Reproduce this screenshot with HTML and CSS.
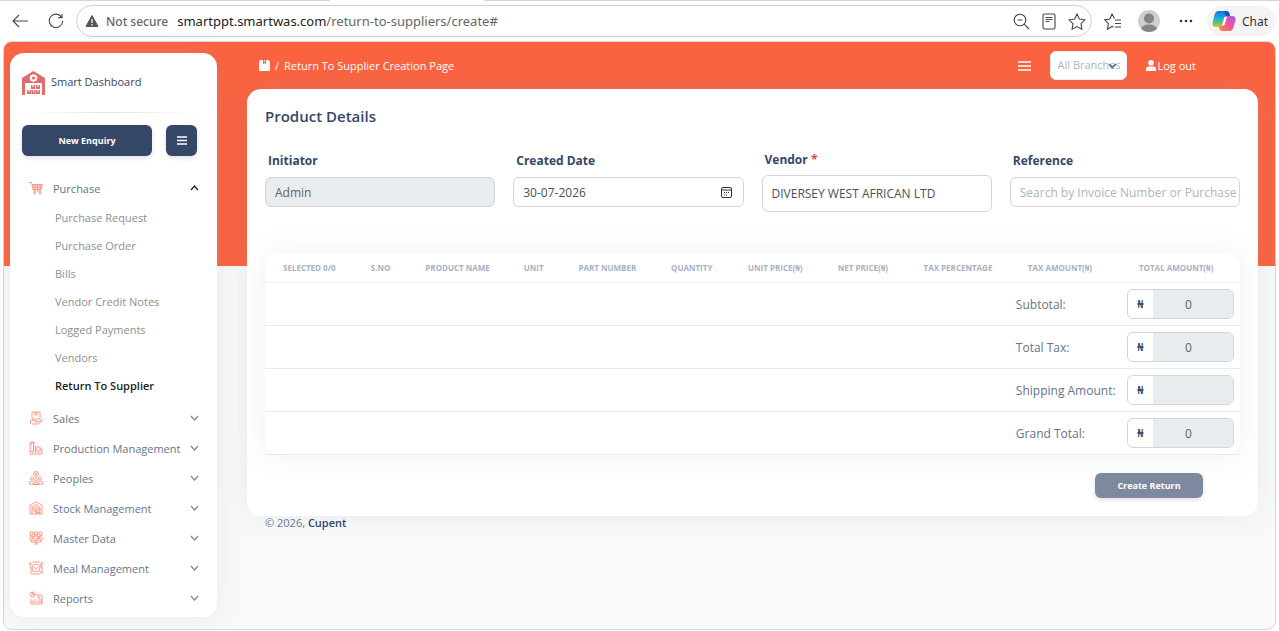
FILE: index.html
```html
<!DOCTYPE html>
<html lang="en">
<head>
    <meta charset="UTF-8">
    <meta name="viewport" content="width=device-width, initial-scale=1.0">
    <title>Return To Supplier</title>
    <link rel="stylesheet" href="styles.css">
</head>
<body>

<!-- browser bar -->
<div class="tabs"><span class="tab-left"></span><span class="tab-active"></span><span class="tab-right"></span></div>
<header class="browser">
    <button class="tool" aria-label="Back"><svg width="18" height="16" viewBox="0 0 18 16"><path d="M17 8H2M8 2L2 8l6 6"/></svg></button>
    <button class="tool reload" aria-label="Reload"><svg width="16" height="16" viewBox="0 0 16 16"><path d="M13.5 4A6.7 6.7 0 1 0 14.7 8M14 1v3.6h-3.6"/></svg></button>
    <div class="address">
        <svg class="warn" width="14" height="14" viewBox="0 0 14 14"><path d="M7 1.5L13 12.5H1z" fill="#555" stroke="#555" stroke-linejoin="round"/><path d="M7 5v4M7 10v1.4" stroke="#fff" stroke-width="1.3"/></svg>
        <span class="secure">Not secure</span>
        <span class="url"><b>smartppt.smartwas.com</b>/return-to-suppliers/create#</span>
        <span class="address-tools">
            <button class="tool" aria-label="Zoom"><svg width="17" height="17" viewBox="0 0 17 17"><circle cx="7" cy="7" r="5.8"/><path d="M4.5 7h5M11.2 11.2L16 16"/></svg></button>
            <button class="tool" aria-label="Reader"><svg width="14" height="17" viewBox="0 0 14 17"><rect x="1" y="1" width="12" height="15" rx="1.5"/><path d="M3.5 4.5h7M3.5 6.5h7M3.5 8.5h4"/></svg></button>
            <button class="tool" aria-label="Favorite"><svg width="18" height="17" viewBox="0 0 18 17"><path d="M9 1l2.4 5 5.6.8-4 3.9.9 5.500L9 13.600l-4.900 2.600.9-5.500-4-3.900L6.600 6z"/></svg></button>
        </span>
    </div>
    <button class="tool" aria-label="Favorites"><svg width="18" height="17" viewBox="0 0 18 17"><path d="M10.500 5.500L8 1 5.800 6l-5 .8 3.600 3.900-.9 5.500L8 13.500l1.500.8M11 7h6M11 10.500h6M11 14h6"/></svg></button>
    <svg class="avatar" width="22" height="22" viewBox="0 0 22 22"><clipPath id="round"><circle cx="11" cy="11" r="11"/></clipPath><g clip-path="url(#round)"><path fill="#d0cecb" d="M0 0h22v22H0z"/><circle cx="11" cy="8.500" r="5" fill="#868482"/><ellipse cx="11" cy="19.500" rx="8" ry="5" fill="#868482"/></g></svg>
    <button class="tool dots" aria-label="More"><svg width="14" height="4" viewBox="0 0 14 4"><circle cx="2" cy="2" r="1.300"/><circle cx="7" cy="2" r="1.300"/><circle cx="12" cy="2" r="1.300"/></svg></button>
    <button class="chat">
        <svg width="24" height="22" viewBox="0 0 24 22">
            <defs>
                <linearGradient id="cool" x1="0" y1="0" x2="0" y2="1"><stop offset="0" stop-color="#1b6fe0"/><stop offset=".4" stop-color="#18a8e8"/><stop offset=".75" stop-color="#5fc46a"/><stop offset="1" stop-color="#f0c419"/></linearGradient>
                <linearGradient id="warm" x1="1" y1="0" x2="0" y2="1"><stop offset="0" stop-color="#a05be8"/><stop offset=".5" stop-color="#f0569a"/><stop offset="1" stop-color="#fb8a3c"/></linearGradient>
            </defs>
            <path d="M6.500 1h8q2 0 2.700 2l.8 3h-3q-2 0-2.700 2L10 15q-.7 2-2.500 2H4q-4 0-3.500-4l2-8Q3.500 1 6.500 1z" fill="url(#cool)"/>
            <path d="M14 1q2.500 0 3.200 2l.8 3h-4l-1.500-3z" fill="#1a4fc0"/>
            <path d="M17.500 21h-7q-2.300 0-3-2l-.7-2.500Q9.500 17 10 15l2.300-7q.7-2 2.700-2h5q4 0 3.500 4l-2 7q-1 4-4 4z" fill="url(#warm)"/>
            <path d="M10.500 14l2-7h2.500l-2.700 8.500H10z" fill="#fff"/>
        </svg>
        Chat
    </button>
</header>

<div class="app">
    <aside class="sidebar">
        <a class="brand" href="#">
            <svg width="23" height="24" viewBox="0 0 23 24">
                <path fill="#e36d6d" d="M0 7L11.500 0 23 7v17h-3V12H3v12H0z"/>
                <circle cx="11.500" cy="7" r="2.600" stroke="#fff" stroke-width="2"/>
                <path d="M11.500 3v1M11.500 10v1M7.500 7h1M14.500 7h1M8.700 4.200l.7.700M13.600 9.100l.7.700M14.300 4.200l-.7.700M9.400 9.100l-.7.700" stroke="#fff"/>
                <path fill="#e36d6d" d="M9 14h4v4H9zM14 14h4v4h-4zM5 19h4v4H5zM9.500 19h4v4h-4zM14 19h4v4h-4z"/>
                <path d="M11 14v2M16 14v2M7 19v2M11.500 19v2M16 19v2" stroke="#fff"/>
            </svg>
            <span>Smart Dashboard</span>
        </a>
        <hr class="line">
        <div class="actions">
            <button class="btn enquiry">New Enquiry</button>
            <button class="btn bars" aria-label="Menu"><svg width="10" height="9" viewBox="0 0 10 9"><path d="M0 1h10M0 4.500h10M0 8h10"/></svg></button>
        </div>
        <nav>
            <ul class="menu">
                <li>
                    <a class="item open" href="#">
                        <svg class="icon" viewBox="0 0 14 14"><path d="M0 1.500h2.500l2 8.500h8M3 3.500h10.500L12 8.500H4M3.500 5h9.500M4 6.800h9M6 3.500v5M8.500 3.500v5M11 3.500v5"/><circle cx="5.500" cy="12" r="1"/><circle cx="11" cy="12" r="1"/></svg>
                        <span>Purchase</span>
                        <svg class="arrow" viewBox="0 0 9 6"><path d="M1 5l3.500-4L8 5"/></svg>
                    </a>
                    <ul class="sub">
                        <li><a href="#">Purchase Request</a></li>
                        <li><a href="#">Purchase Order</a></li>
                        <li><a href="#">Bills</a></li>
                        <li><a href="#">Vendor Credit Notes</a></li>
                        <li><a href="#">Logged Payments</a></li>
                        <li><a href="#">Vendors</a></li>
                        <li><a class="active" href="#">Return To Supplier</a></li>
                    </ul>
                </li>
                <li><a class="item" href="#">
                    <svg class="icon" viewBox="0 0 14 14"><path d="M3 1h8v7H3zM6 1v3h2V1M1.500 9v4M3 9.500h3l3 1.500H6M9 11l3.500-2 .5 1-3.500 3H3"/></svg>
                    <span>Sales</span><svg class="arrow" viewBox="0 0 9 6"><path d="M1 1l3.500 4L8 1"/></svg></a></li>
                <li><a class="item" href="#">
                    <svg class="icon" viewBox="0 0 14 14"><path d="M1 10V2h3.500v8M2 2V1h3v2M4.500 5h2v5M8 9V6h3v3M1 10h12v3H1zM2 4h1M2 7h1M11 8h2v2M3 11.500h1M6 11.500h1M9 11.500h1"/></svg>
                    <span>Production Management</span><svg class="arrow" viewBox="0 0 9 6"><path d="M1 1l3.500 4L8 1"/></svg></a></li>
                <li><a class="item" href="#">
                    <svg class="icon" viewBox="0 0 14 14"><circle cx="7" cy="3" r="2.500"/><circle cx="7" cy="3" r=".8"/><circle cx="3" cy="7.500" r="1.500"/><circle cx="11" cy="7.500" r="1.500"/><circle cx="7" cy="8.500" r="1.500"/><path d="M0 13q0-3 3-3 1.500 0 2 1M14 13q0-3-3-3-1.500 0-2 1M4 13.500q0-2.500 3-2.500t3 2.500zM0 13h14"/></svg>
                    <span>Peoples</span><svg class="arrow" viewBox="0 0 9 6"><path d="M1 1l3.500 4L8 1"/></svg></a></li>
                <li><a class="item" href="#">
                    <svg class="icon" viewBox="0 0 14 14"><path d="M1 13V4l6-3 6 3v9zM3 13V6h8v7M3 8h8M5 4h4M4 10h3v3M8 10h3M8 11.500h3M7 8v5"/></svg>
                    <span>Stock Management</span><svg class="arrow" viewBox="0 0 9 6"><path d="M1 1l3.500 4L8 1"/></svg></a></li>
                <li><a class="item" href="#">
                    <svg class="icon" viewBox="0 0 14 14"><path d="M1 1h3v3H1zM5.500 1h3v3h-3zM10 1h3v3h-3zM1 6h12v3H1zM1 4l3 2 3-2 3 2 3-2M3 7.500h2M7 7.500h4M2 9v2h10V9M7 9v4M5 13h4"/></svg>
                    <span>Master Data</span><svg class="arrow" viewBox="0 0 9 6"><path d="M1 1l3.500 4L8 1"/></svg></a></li>
                <li><a class="item" href="#">
                    <svg class="icon" viewBox="0 0 14 14"><circle cx="7" cy="7" r="4"/><path d="M1 1v4q1 1 1 2v6M13 1v12M13 1q-2 2-1 6M3 1h8M2.500 13h9M5 6l2 2.500L9 6M1 3h2M11 11h2"/></svg>
                    <span>Meal Management</span><svg class="arrow" viewBox="0 0 9 6"><path d="M1 1l3.500 4L8 1"/></svg></a></li>
                <li><a class="item" href="#">
                    <svg class="icon" viewBox="0 0 14 14"><circle cx="3.500" cy="3.500" r="2.500"/><path d="M3.500 1v2.500H6M7 4h6v9H2V8M4 12V9M6 12V8M8 12v-2M10 12V7M8 6h3M12 12V8"/></svg>
                    <span>Reports</span><svg class="arrow" viewBox="0 0 9 6"><path d="M1 1l3.500 4L8 1"/></svg></a></li>
            </ul>
        </nav>
    </aside>

    <main class="main">
        <div class="topbar">
            <svg width="11" height="11" viewBox="0 0 11 11"><path fill="#fff" d="M2 0h2v3.500l1.500-1L7 3.500V0h2q2 0 2 3v7q0 1-1 1H1q-1 0-1-1V3q0-3 2-3z"/><path fill="#fb6340" d="M4 0h3v4L5.500 3 4 4z"/><path fill="#ffd0b8" d="M5 0h1v2H5z"/></svg>
            <span class="slash">/</span>
            <span class="crumb">Return To Supplier Creation Page</span>
            <button class="toggle" aria-label="Toggle menu"><svg width="13" height="10" viewBox="0 0 13 10"><path d="M0 1h13M0 5h13M0 9h13"/></svg></button>
            <div class="branch">
                <select aria-label="Branch"><option>All Branches</option></select>
                <svg width="9" height="6" viewBox="0 0 9 6"><path d="M1 1l3.500 3.500L8 1"/></svg>
            </div>
            <a class="logout" href="#"><svg width="10" height="11" viewBox="0 0 10 11"><circle cx="5" cy="2.800" r="2.800"/><path d="M0 11V9.500Q0 6.500 3 6.500h4q3 0 3 3V11z"/></svg>Log out</a>
        </div>

        <section class="card">
            <h5>Product Details</h5>
            <form class="fields">
                <div class="field">
                    <label for="initiator">Initiator</label>
                    <input type="text" id="initiator" value="Admin" disabled>
                </div>
                <div class="field date">
                    <label for="date">Created Date</label>
                    <input type="text" id="date" value="30-07-2026">
                    <svg width="11" height="11" viewBox="0 0 11 11"><rect x=".5" y=".5" width="10" height="10" rx="1.500"/><path d="M.5 3h10M3 5.500h1M5 5.500h1M7 5.500h1M3 8h1M5 8h1"/></svg>
                </div>
                <div class="field vendor">
                    <label for="vendor">Vendor <span class="red">*</span></label>
                    <input type="text" id="vendor" value="DIVERSEY WEST AFRICAN LTD">
                </div>
                <div class="field">
                    <label for="reference">Reference</label>
                    <input type="text" id="reference" placeholder="Search by Invoice Number or Purchase">
                </div>
            </form>

            <table class="items">
                <colgroup>
                    <col class="w9"><col class="w6"><col class="w10"><col class="w6"><col class="w95"><col class="w8"><col class="w92"><col class="w88"><col class="w107"><col class="w114"><col>
                </colgroup>
                <thead>
                    <tr>
                        <th>SELECTED 0/0</th>
                        <th>S.NO</th>
                        <th>PRODUCT NAME</th>
                        <th>UNIT</th>
                        <th>PART NUMBER</th>
                        <th>QUANTITY</th>
                        <th>UNIT PRICE(₦)</th>
                        <th>NET PRICE(₦)</th>
                        <th>TAX PERCENTAGE</th>
                        <th>TAX AMOUNT(₦)</th>
                        <th>TOTAL AMOUNT(₦)</th>
                    </tr>
                </thead>
                <tbody>
                    <tr>
                        <td colspan="9"></td>
                        <td><label for="subtotal">Subtotal:</label></td>
                        <td><div class="money"><span>₦</span><input type="text" id="subtotal" value="0" disabled></div></td>
                    </tr>
                    <tr>
                        <td colspan="9"></td>
                        <td><label for="tax">Total Tax:</label></td>
                        <td><div class="money"><span>₦</span><input type="text" id="tax" value="0" disabled></div></td>
                    </tr>
                    <tr>
                        <td colspan="9"></td>
                        <td><label for="shipping">Shipping Amount:</label></td>
                        <td><div class="money"><span>₦</span><input type="text" id="shipping" disabled></div></td>
                    </tr>
                    <tr>
                        <td colspan="9"></td>
                        <td><label for="total">Grand Total:</label></td>
                        <td><div class="money"><span>₦</span><input type="text" id="total" value="0" disabled></div></td>
                    </tr>
                </tbody>
            </table>
            <div class="submit"><button class="btn create" disabled>Create Return</button></div>
        </section>
        <footer>© 2026, <a href="#">Cupent</a></footer>
    </main>
</div>

</body>
</html>
```
FILE: styles.css
```css
*{
    box-sizing: border-box;
}
body{
    margin: 0;
    min-height: 100vh;
    padding-bottom: 1px;
    display: flex;
    flex-direction: column;
    background-color: #fff;
    font-family: "Open Sans", "Noto Sans", sans-serif;
    font-size: 12px;
    color: #67748e;
}
a{
    color: inherit;
    text-decoration: none;
}
ul{
    list-style: none;
    margin: 0;
    padding: 0;
}
button, input, select{
    font-family: inherit;
}
button{
    padding: 0;
    border: 0;
    background: none;
}
svg{
    flex: none;
    fill: none;
}

/* browser bar */
.tabs{
    display: flex;
    height: 1px;
}
.tab-left{
    width: 330px;
    background-color: #d6d6d6;
}
.tab-active{
    width: 154px;
}
.tab-right{
    flex: 1;
    background-color: #d6d6d6;
}
.browser{
    display: flex;
    align-items: center;
    height: 40px;
    padding: 0 3px 0 11px;
}
.tool{
    display: flex;
}
.tool svg{
    stroke: #444;
    stroke-width: 1.1;
}
.reload{
    margin: 0 12px 0 19px;
}
.address{
    flex: 1;
    display: flex;
    align-items: center;
    height: 32px;
    margin-right: 12px;
    padding: 0 5px 0 8px;
    border: 1px solid #d0d0d0;
    border-radius: 16px;
    font-family: "Noto Sans", sans-serif;
    color: #666;
}
.secure{
    margin: 0 9px 0 7px;
    font-size: 12px;
    font-weight: 500;
}
.url{
    font-size: 13px;
}
.url b{
    font-weight: 400;
    color: #222;
}
.address-tools{
    display: flex;
    align-items: center;
    gap: 12px;
    margin-left: auto;
}
.avatar{
    margin: 0 19px 0 16px;
}
.dots svg{
    fill: #333;
    stroke: none;
}
.chat{
    display: flex;
    align-items: center;
    gap: 6px;
    height: 30px;
    margin-left: 14px;
    padding: 0 8px 0 5px;
    border-radius: 15px;
    background-color: #f4f4f4;
    font-family: "Noto Sans", sans-serif;
    font-size: 12px;
    color: #333;
}

/* page */
.app{
    flex: 1;
    display: flex;
    align-items: flex-start;
    margin: 0 3px;
    padding: 11px 17px 11px 6px;
    border: 1px solid #d5d7da;
    border-radius: 9px;
    background: linear-gradient(#fb6340 224px, #f8f9fa 224px);
}
.sidebar{
    width: 207px;
    padding: 18px 12px 4px;
    border-radius: 14px;
    background-color: #fff;
    box-shadow: 0 0 28px rgba(136, 152, 170, .15);
}
.brand{
    display: flex;
    gap: 6px;
    height: 24px;
    color: #344767;
    font-size: 11px;
    font-weight: 500;
    line-height: 22px;
}
.line{
    height: 1px;
    margin: 17px 0 12px;
    border: 0;
    background: linear-gradient(90deg, transparent, #e3e4e6, transparent);
}
.actions{
    display: flex;
    gap: 14px;
    margin-bottom: 17px;
}
.btn{
    border-radius: 6px;
    background-color: #344767;
    box-shadow: 0 2px 4px rgba(50, 50, 93, .15);
    color: #fff;
    font-size: 9px;
    font-weight: 700;
}
.enquiry{
    width: 130px;
    height: 31px;
}
.bars{
    display: flex;
    align-items: center;
    justify-content: center;
    width: 31px;
}
.bars svg{
    stroke: #fff;
    stroke-width: 1.3;
}
.item{
    display: flex;
    align-items: center;
    height: 30px;
    padding: 0 6px 0 7px;
    font-size: 11px;
}
.item span{
    flex: 1;
    margin-left: 10px;
}
.icon{
    width: 14px;
    height: 14px;
    stroke: #fb8468;
    stroke-width: .8;
}
.arrow{
    width: 9px;
    height: 6px;
    stroke: #888;
    stroke-width: 1.3;
}
.open .arrow{
    stroke: #222;
}
.sub{
    padding: 1px 0 3px;
}
.sub a{
    display: block;
    padding-left: 33px;
    font-size: 11px;
    line-height: 28px;
    color: #8f8f8f;
}
.sub .active{
    color: #222;
    font-weight: 600;
}

.main{
    flex: 1;
    min-width: 0;
    margin-left: 30px;
}
.topbar{
    display: flex;
    align-items: center;
    height: 36px;
    padding: 0 62px 11px 12px;
    color: #fff;
    font-size: 11px;
}
.slash{
    margin: 0 5px;
}
.toggle{
    display: flex;
    margin-left: auto;
}
.toggle svg{
    stroke: #fff;
    stroke-width: 1.5;
}
.branch{
    position: relative;
    margin: 0 19px;
}
.branch select{
    display: block;
    appearance: none;
    width: 77px;
    height: 29px;
    padding: 0 6px 3px 7px;
    border: 1px solid #eee;
    border-radius: 6px;
    background-color: #fff;
    font-size: 11px;
    color: #adb5bd;
}
.branch svg{
    position: absolute;
    right: 10px;
    top: 12px;
    stroke: #56657f;
    stroke-width: 1.5;
}
.logout{
    display: flex;
    align-items: center;
    gap: 2px;
}
.logout svg{
    fill: #fff;
}

.card{
    padding: 18px;
    border-radius: 14px;
    background-color: #fff;
    box-shadow: 0 0 28px rgba(136, 152, 170, .15);
}
h5{
    margin: 0 0 25px;
    font-size: 15px;
    font-weight: 600;
    line-height: 19px;
    color: #344767;
}
.fields{
    display: grid;
    grid-template-columns: repeat(4, minmax(0, 1fr));
    gap: 18px;
    margin-bottom: 41px;
}
.field{
    position: relative;
}
.field label{
    display: block;
    margin: 1px 3px 7px;
    font-size: 12px;
    font-weight: 700;
    line-height: 18px;
    color: #344767;
}
.field input{
    display: block;
    width: 100%;
    height: 30px;
    padding: 0 3px 0 9px;
    border: 1px solid #d2d6da;
    border-radius: 6px;
    background-color: #fff;
    font-size: 12px;
    color: #495057;
}
.field input::placeholder{
    color: #adb5bd;
}
.field input:disabled{
    background-color: #e9ecef;
    color: #5c646c;
}
.field.vendor label{
    margin: 0 3px 6px;
}
.field.vendor input{
    height: 37px;
}
.field.date svg{
    position: absolute;
    right: 12px;
    top: 36px;
    stroke: #333;
}
.red{
    color: #f5365c;
}

.items{
    width: 100%;
    table-layout: fixed;
    border-collapse: separate;
    border-spacing: 0;
    border-radius: 14px;
    box-shadow: 0 0 28px rgba(136, 152, 170, .15);
}
.w9{ width: 9%; }
.w6{ width: 5.6%; }
.w10{ width: 10.1%; }
.w95{ width: 9.5%; }
.w8{ width: 7.9%; }
.w92{ width: 9.2%; }
.w88{ width: 8.8%; }
.w107{ width: 10.7%; }
.w114{ width: 11.4%; }
.items th{
    height: 30px;
    padding: 0 0 0 18px;
    border-bottom: 1px solid #f1f3f5;
    text-align: left;
    font-size: 8px;
    font-weight: 700;
    white-space: nowrap;
    color: #a8b1c3;
}
.items td{
    height: 43px;
    padding: 6px 6px;
    border-bottom: 1px solid #e9ecef;
    font-size: 12px;
    white-space: nowrap;
}
.money{
    display: flex;
    height: 30px;
    overflow: hidden;
    border: 1px solid #d2d6da;
    border-radius: 6px;
}
.money span{
    width: 25px;
    line-height: 28px;
    text-align: center;
    font-size: 11px;
    font-weight: 600;
    color: #344767;
}
.money input{
    flex: 1;
    min-width: 0;
    padding: 0 9px 0 0;
    border: 0;
    background-color: #e9ecef;
    text-align: center;
    font-size: 12px;
    color: #5c646c;
}
.submit{
    display: flex;
    justify-content: flex-end;
    margin-top: 18px;
    padding-right: 37px;
}
.create{
    width: 108px;
    height: 25px;
    background-color: #7d899f;
}
footer{
    padding-left: 18px;
    font-size: 11px;
    line-height: 14px;
}
footer a{
    font-weight: 600;
    color: #344767;
}
```
